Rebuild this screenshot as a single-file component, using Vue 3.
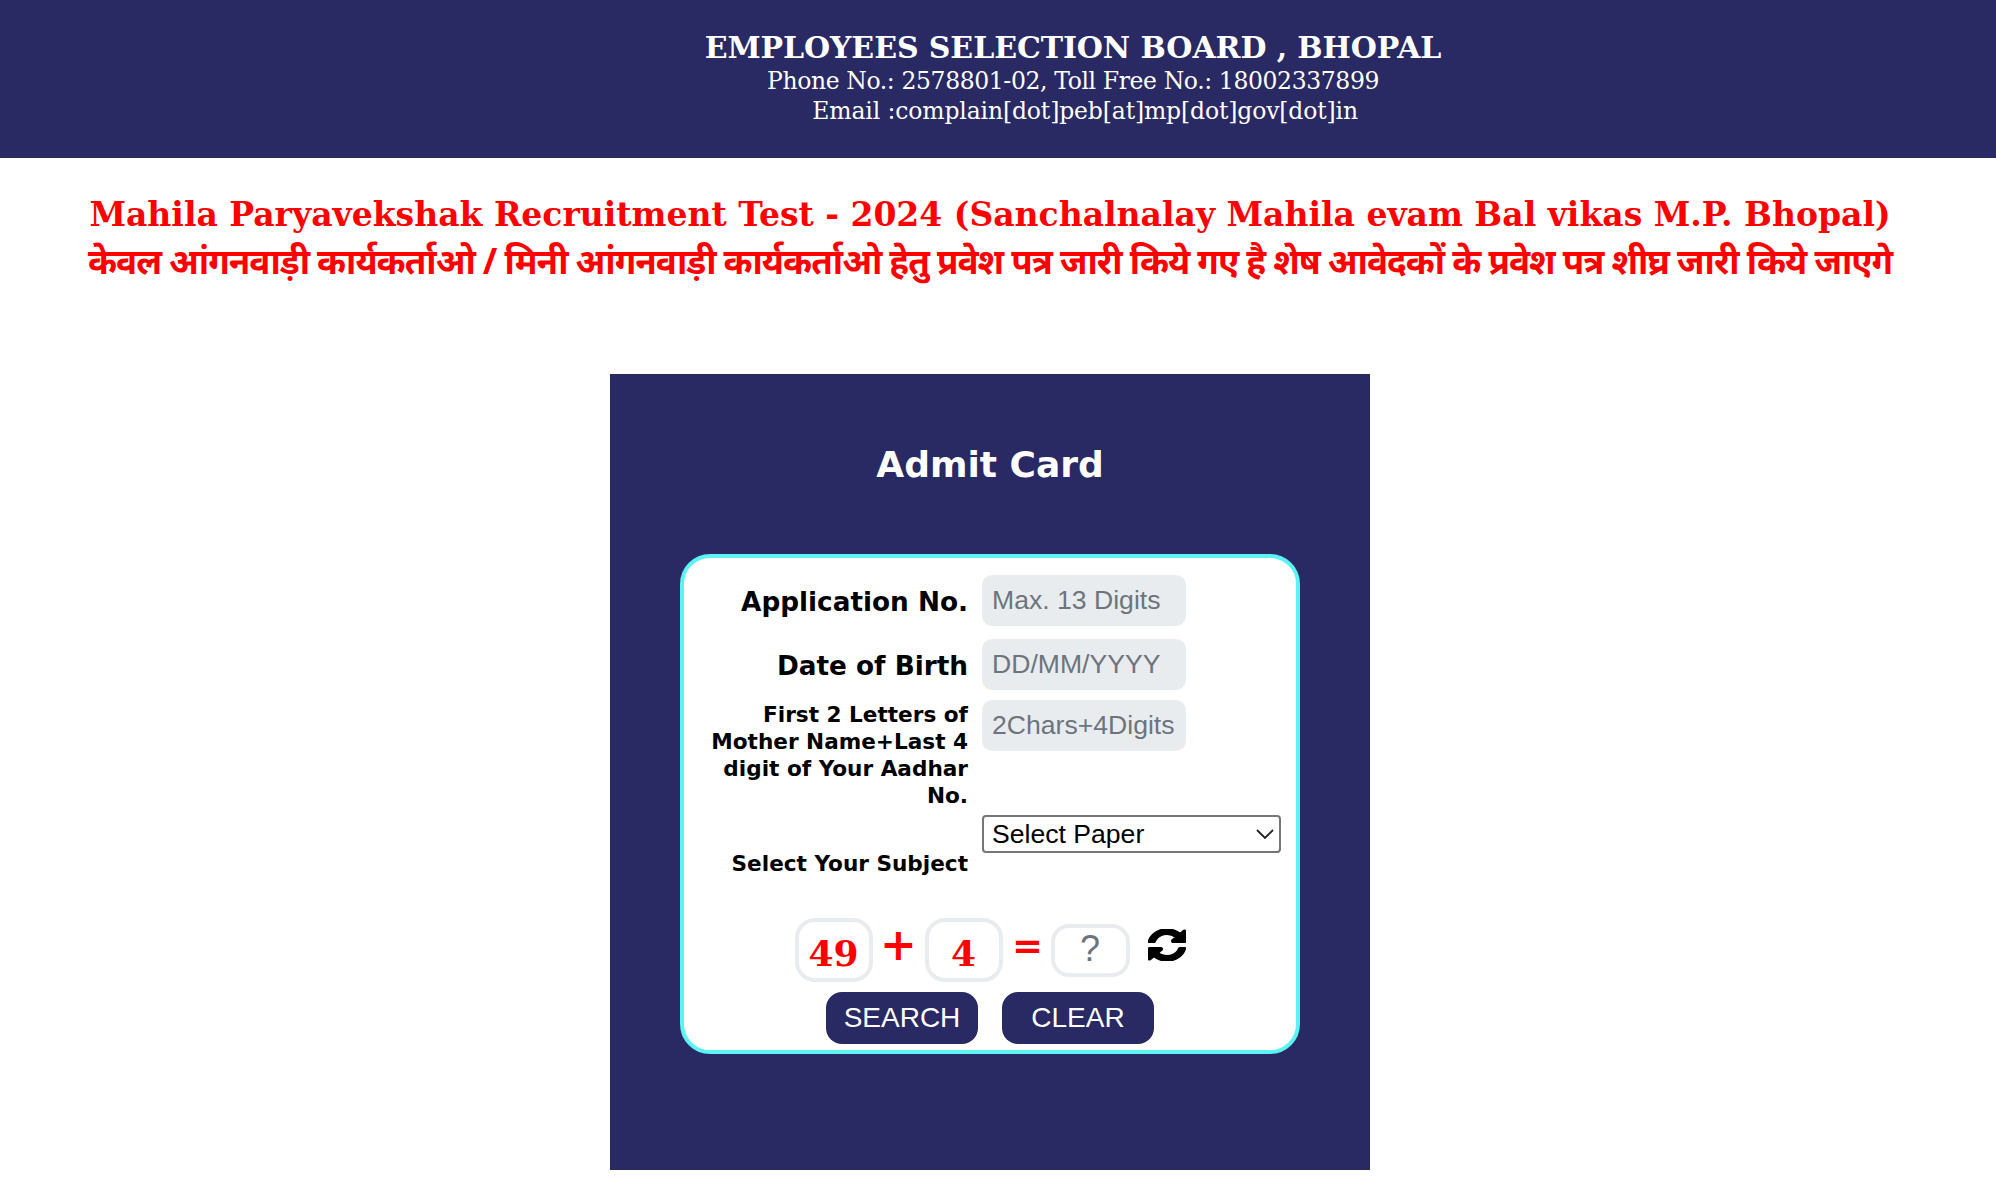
<script setup>
const inputs = ['Max. 13 Digits', 'DD/MM/YYYY', '2Chars+4Digits']
</script>

<template>
  <div class="page">
    <header class="top">
      <div class="org">EMPLOYEES SELECTION BOARD , BHOPAL</div>
      <div class="line phone">Phone No.: 2578801-02, Toll Free No.: 18002337899</div>
      <div class="line email">&nbsp;&nbsp;&nbsp;&nbsp;Email :complain[dot]peb[at]mp[dot]gov[dot]in</div>
    </header>
    <main class="content">
      <h1 class="notice">
        <span class="en">Mahila Paryavekshak Recruitment Test - 2024 (Sanchalnalay Mahila evam Bal vikas M.P. Bhopal)</span>
        <span class="hi">केवल आंगनवाड़ी कार्यकर्ताओ / मिनी आंगनवाड़ी कार्यकर्ताओ हेतु प्रवेश पत्र जारी किये गए है शेष आवेदकों के प्रवेश पत्र शीघ्र जारी किये जाएगे</span>
      </h1>
      <section class="panel">
        <h2 class="heading">Admit Card</h2>
        <form class="card" @submit.prevent>
          <div class="row row-one">
            <label class="lbl big">Application No.</label>
            <input class="field" type="text" :placeholder="inputs[0]" />
          </div>
          <div class="row row-two">
            <label class="lbl big">Date of Birth</label>
            <input class="field" type="text" :placeholder="inputs[1]" />
          </div>
          <div class="row row-three">
            <label class="lbl">First 2 Letters of Mother Name+Last 4 digit of Your Aadhar No.</label>
            <input class="field" type="text" :placeholder="inputs[2]" />
          </div>
          <div class="row row-four">
            <label class="lbl subject">Select Your Subject</label>
            <div class="select-wrap">
              <select class="select"><option>Select Paper</option></select>
              <svg class="chev" viewBox="0 0 18 10" width="18" height="10" aria-hidden="true">
                <path d="M1 1l8 8 8-8" fill="none" stroke="#222" stroke-width="1.8" />
              </svg>
            </div>
          </div>
          <div class="captcha">
            <div class="num">49</div>
            <span class="op plus">+</span>
            <div class="num">4</div>
            <span class="op eq">=</span>
            <input class="answer" type="text" placeholder="?" />
            <svg class="refresh" viewBox="128 128 1536 1536" preserveAspectRatio="none" aria-hidden="true">
              <path d="M1639 1056q0 5-1 7-64 268-268 434.5t-478 166.5q-146 0-282.5-55t-243.5-157l-129 129q-19 19-45 19t-45-19-19-45v-448q0-26 19-45t45-19h448q26 0 45 19t19 45-19 45l-137 137q71 66 161 102t187 36q134 0 250-65t186-179q11-17 53-117 8-23 30-23h192q13 0 22.5 9.5t9.5 22.5zm25-800v448q0 26-19 45t-45 19h-448q-26 0-45-19t-19-45 19-45l138-138q-148-137-349-137-134 0-250 65t-186 179q-11 17-53 117-8 23-30 23h-199q-13 0-22.5-9.5t-9.5-22.5v-7q65-268 270-434.5t480-166.5q146 0 284 55.5t245 156.5l130-129q19-19 45-19t45 19 19 45z" />
            </svg>
          </div>
          <div class="actions">
            <button class="btn" type="submit">SEARCH</button>
            <button class="btn" type="reset">CLEAR</button>
          </div>
        </form>
      </section>
    </main>
  </div>
</template>

<style scoped>
.page {
  width: 1996px;
  height: 1190px;
  overflow: hidden;
  background: #fff;
}
.top {
  height: 158px;
  box-sizing: border-box;
  padding: 30px 0 0 150px;
  background: #292963;
  color: #fff;
  text-align: center;
  font-family: "DejaVu Serif", "Liberation Serif", serif;
}
.org {
  font-size: 30px;
  font-weight: 700;
  line-height: 36px;
  letter-spacing: -0.1px;
}
.line {
  font-size: 23.5px;
  line-height: 30px;
}
.phone {
  letter-spacing: -0.39px;
}
.email {
  padding-right: 5px;
  letter-spacing: -0.14px;
}
.content {
  width: 1980px;
}
.notice {
  margin: 0;
  padding-top: 33px;
  text-align: center;
  color: #f00;
  font-weight: 700;
  white-space: nowrap;
}
.en,
.hi {
  display: block;
}
.en {
  font-family: "DejaVu Serif", "Liberation Serif", serif;
  font-size: 33px;
  line-height: 47px;
}
.hi {
  font-family: "Noto Sans", "Noto Sans CJK SC", sans-serif;
  font-size: 35px;
  line-height: 46px;
  letter-spacing: -1px;
}
.panel {
  width: 760px;
  height: 796px;
  box-sizing: border-box;
  margin: 90px auto 0;
  padding: 0 70px;
  background: #292963;
}
.heading {
  margin: 0;
  padding: 69px 0 67px;
  color: #fff;
  text-align: center;
  font-family: "DejaVu Sans", sans-serif;
  font-size: 36px;
  font-weight: 700;
  line-height: 44px;
}
.card {
  height: 500px;
  box-sizing: border-box;
  padding: 17px 0 0;
  background: #fff;
  border: 4px solid #5cf3f5;
  border-radius: 30px;
}
.row {
  display: grid;
  grid-template-columns: 270px 299px;
  column-gap: 14px;
  padding-left: 14px;
}
.row-one,
.row-two {
  align-items: center;
}
.row-two {
  margin-top: 13px;
}
.row-three {
  margin-top: 10px;
  align-items: start;
}
.row-four {
  margin-top: 6px;
  align-items: start;
}
.lbl {
  color: #000;
  text-align: right;
  font-family: "DejaVu Sans", sans-serif;
  font-size: 21.6px;
  font-weight: 700;
  line-height: 27px;
}
.row-three .lbl {
  padding-top: 1px;
}
.big {
  font-size: 26.3px;
  line-height: 32px;
  padding-top: 3px;
}
.subject {
  padding-top: 35px;
}
.field {
  width: 204px;
  height: 51px;
  box-sizing: border-box;
  padding: 0 10px;
  border: 0;
  border-radius: 10px;
  background: #e9ecef;
  color: #495057;
  font-family: "Liberation Sans", Arial, sans-serif;
  font-size: 26.6px;
  outline: 0;
}
.field::placeholder,
.answer::placeholder {
  color: #6c757d;
  opacity: 1;
}
.select-wrap {
  position: relative;
  width: 299px;
  height: 38px;
}
.select {
  display: block;
  width: 100%;
  height: 100%;
  box-sizing: border-box;
  padding: 0 0 0 8px;
  border: 2px solid #767676;
  border-radius: 4px;
  background: #fff;
  color: #000;
  font-family: "Liberation Sans", Arial, sans-serif;
  font-size: 26.6px;
  appearance: none;
}
.chev {
  position: absolute;
  top: 14px;
  right: 7px;
  pointer-events: none;
}
.captcha {
  display: flex;
  align-items: center;
  justify-content: center;
  margin-top: 41px;
}
.num {
  width: 78px;
  height: 64px;
  box-sizing: border-box;
  border: 4px solid #e9ecef;
  border-radius: 20px;
  color: #f00;
  text-align: center;
  font-family: "DejaVu Serif", "Liberation Serif", serif;
  font-size: 36px;
  font-weight: 700;
  line-height: 62px;
}
.op {
  color: #f00;
  text-align: center;
  font-family: "DejaVu Serif", "Liberation Serif", serif;
  font-weight: 700;
  font-size: 44px;
}
.plus {
  width: 52px;
  margin-top: -12px;
}
.eq {
  width: 48px;
  margin-top: -8px;
  font-size: 37px;
  padding-left: 2px;
  box-sizing: border-box;
}
.answer {
  width: 79px;
  height: 53px;
  box-sizing: border-box;
  padding: 0 0 3px;
  border: 4px solid #e9ecef;
  border-radius: 18px;
  background: #fff;
  text-align: center;
  font-family: "Liberation Sans", Arial, sans-serif;
  font-size: 36px;
  outline: 0;
}
.refresh {
  width: 38px;
  height: 32px;
  margin: -10px 0 0 18px;
  fill: #000;
  stroke: #000;
  stroke-width: 70;
}
.actions {
  display: flex;
  justify-content: center;
  gap: 24px;
  margin-top: 10px;
}
.btn {
  width: 152px;
  height: 52px;
  padding: 0;
  border: 0;
  border-radius: 16px;
  background: #292963;
  color: #fff;
  font-family: "Liberation Sans", Arial, sans-serif;
  font-size: 28px;
}
</style>

<style>
html,
body {
  margin: 0;
  background: #fff;
}
</style>
